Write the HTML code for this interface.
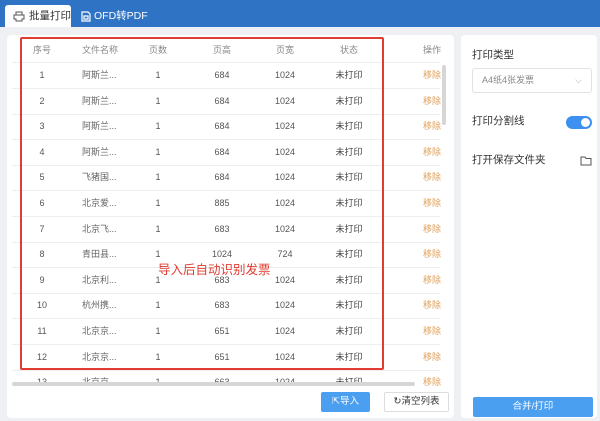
<!DOCTYPE html>
<html><head><meta charset="utf-8"><style>
*{margin:0;padding:0;box-sizing:border-box}
body{width:600px;height:421px;background:#eef0f3;font-family:"Liberation Sans","Noto Sans CJK SC",sans-serif;position:relative;overflow:hidden;font-size:9px;color:#555;line-height:12px}
.top{position:absolute;left:0;top:0;width:600px;height:27px;background:#2f74c4}
.tab{position:absolute;top:5px;height:22px;line-height:22px;font-size:10.5px}
.a{left:5px;width:66px;background:#fff;border-radius:3px 3px 0 0;color:#333;padding-left:24px}
.b{left:80px;color:#fff;padding-left:14px}
.panel{position:absolute;background:#fff;border-radius:4px}
.c{position:absolute;text-align:center;transform:translateX(-50%);white-space:nowrap;height:12px;line-height:12px}
.row{position:absolute;left:12px;width:428px;height:1px;background:#eee}
.red{position:absolute;left:20px;top:37px;width:364px;height:333px;border:2px solid #e03c31;border-radius:2px}
</style></head><body>
<div class="top"></div>
<div class="tab a"><svg style="position:absolute;left:8px;top:6px" width="12" height="11" viewBox="0 0 12 11"><path d="M3 4V1h6v3M1 4h10v4H9v2H3V8H1z" fill="none" stroke="#555" stroke-width="1"/></svg>批量打印</div>
<div class="tab b"><svg style="position:absolute;left:1px;top:6px" width="10" height="11" viewBox="0 0 10 11"><path d="M1 1h6l2 2v7H1z M3 5h4v3H3z" fill="none" stroke="#fff" stroke-width="1.2"/></svg>OFD转PDF</div>
<div class="panel" style="left:7px;top:35px;width:447px;height:383px"></div>
<div class="panel" style="left:461px;top:35px;width:136px;height:383px"></div>
<div id="t"></div>
<div class="red"></div>
<div style="position:absolute;left:158px;top:262px;color:#e03c31;font-size:12.5px;line-height:16px">导入后自动识别发票</div>
<div style="position:absolute;left:12px;top:382px;width:403px;height:4px;background:#d6d6d6;border-radius:2px"></div>
<div style="position:absolute;left:442px;top:65px;width:4px;height:60px;background:#d6d6d6;border-radius:2px"></div>
<div style="position:absolute;left:321px;top:392px;width:49px;height:20px;background:#4a9ff0;border-radius:2px;color:#fff;font-size:9.5px;line-height:20px;text-align:center">⇱导入</div>
<div style="position:absolute;left:384px;top:392px;width:65px;height:20px;background:#fff;border:1px solid #ddd;border-radius:2px;color:#333;font-size:9.5px;line-height:18px;text-align:center">↻清空列表</div>
<div style="position:absolute;left:472px;top:48px;font-size:10.5px;line-height:14px;color:#333">打印类型</div>
<div style="position:absolute;left:472px;top:68px;width:120px;height:25px;border:1px solid #e2e2e2;border-radius:3px;color:#888;font-size:9px;line-height:23px;padding-left:9px">A4纸4张发票<span style="position:absolute;right:9px;color:#aaa">⌵</span></div>
<div style="position:absolute;left:472px;top:114px;font-size:10.5px;line-height:14px;color:#333">打印分割线</div>
<div style="position:absolute;left:566px;top:116px;width:26px;height:13px;background:#3d8ff0;border-radius:7px"><div style="position:absolute;right:2px;top:2px;width:9px;height:9px;border-radius:50%;background:#fff"></div></div>
<div style="position:absolute;left:472px;top:153px;font-size:10.5px;line-height:14px;color:#333">打开保存文件夹</div>
<svg style="position:absolute;left:580px;top:156px" width="12" height="10" viewBox="0 0 12 10"><path d="M1 1h4l1 1.5h5V9H1z" fill="none" stroke="#555" stroke-width="1"/></svg>
<div style="position:absolute;left:473px;top:397px;width:120px;height:20px;background:#4a9ff0;border-radius:2px;color:#fff;font-size:9.5px;line-height:20px;text-align:center">合并/打印</div>
<script>
var d=[["1","阿斯兰...","1","684","1024"],["2","阿斯兰...","1","684","1024"],["3","阿斯兰...","1","684","1024"],["4","阿斯兰...","1","684","1024"],["5","飞猪国...","1","684","1024"],["6","北京爱...","1","885","1024"],["7","北京飞...","1","683","1024"],["8","青田县...","1","1024","724"],["9","北京利...","1","683","1024"],["10","杭州携...","1","683","1024"],["11","北京京...","1","651","1024"],["12","北京京...","1","651","1024"],["13","北京京...","1","663","1024"]];
var h='';var xs=[42,0,158,222,285,349,432];
function cell(x,y,t,st){h+='<div class="c" style="left:'+x+'px;top:'+y+'px;'+(st||'')+'">'+t+'</div>';}
var hy=44;['序号','','页数','页高','页宽','状态','操作'].forEach(function(t,i){if(i!=1)cell(xs[i],hy,t,'color:#888');});
h+='<div class="c" style="left:100px;top:44px;color:#888">文件名称</div>';
h+='<div class="row" style="top:62px"></div>';
d.forEach(function(r,k){var y=69+k*25.6;
cell(42,y,r[0]);h+='<div style="position:absolute;left:82px;top:'+y+'px;height:12px;line-height:12px;color:#666">'+r[1]+'</div>';
cell(158,y,r[2]);cell(222,y,r[3]);cell(285,y,r[4]);cell(349,y,'未打印','color:#444');cell(432,y,'移除','color:#e0a05a');
if(k<12)h+='<div class="row" style="top:'+(y+19)+'px"></div>';});
document.getElementById('t').innerHTML=h;
</script>
</body></html>
